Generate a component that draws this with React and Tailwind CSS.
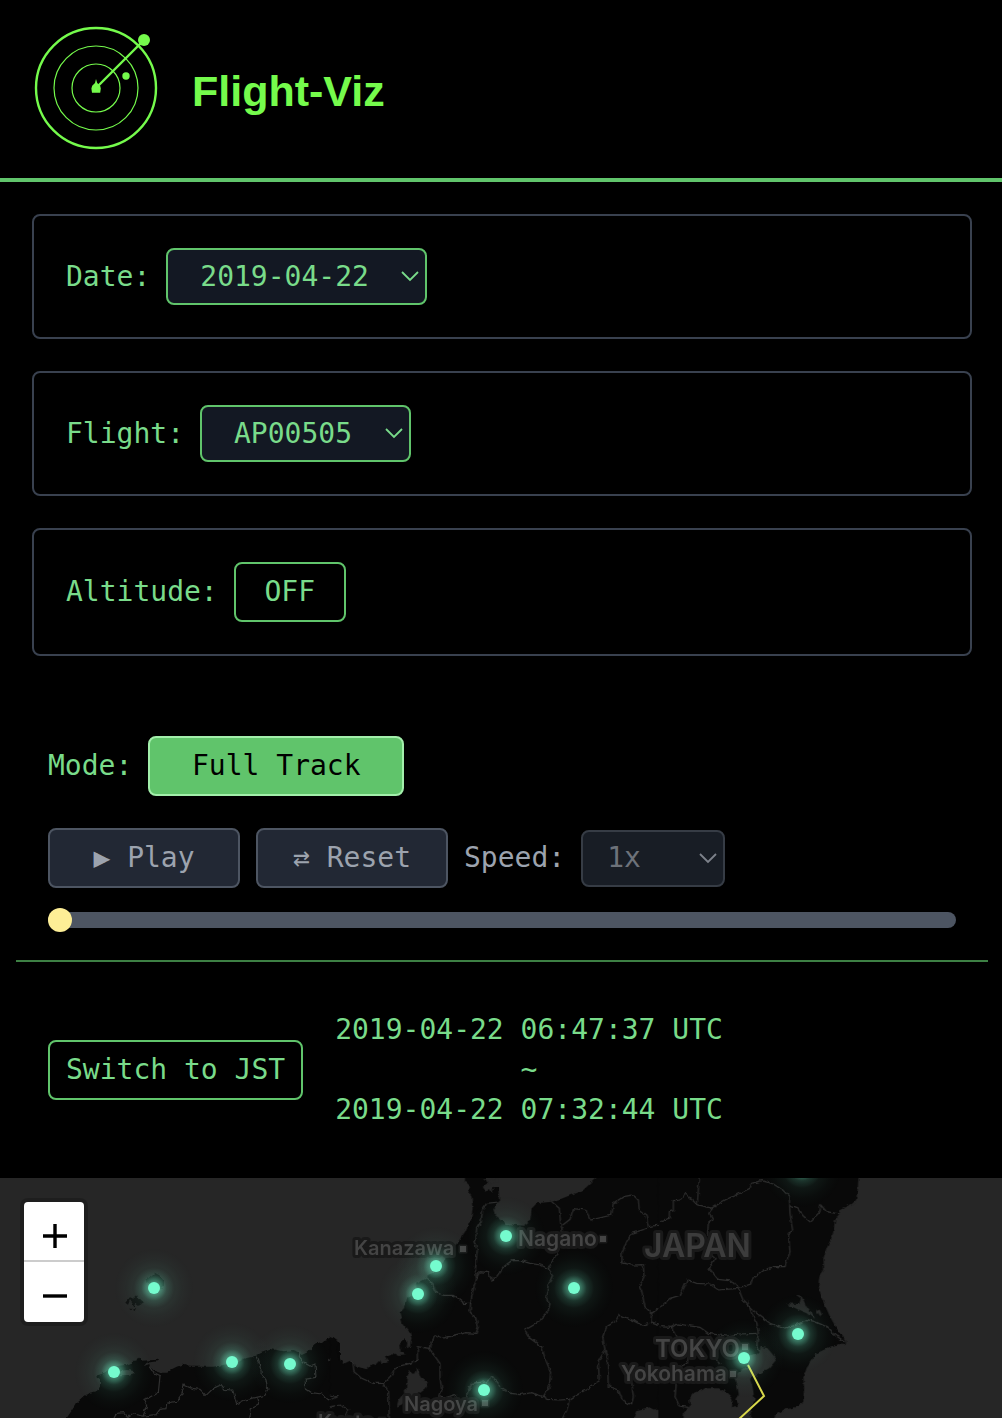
import React, { useState } from "react";

function RadarLogo() {
  return (
    <svg className="size-32 shrink-0" viewBox="0 0 128 128" fill="none" stroke="#75fb4c" aria-hidden="true">
      <circle cx="64" cy="64" r="60" strokeWidth="2.4" />
      <circle cx="64" cy="64" r="42" strokeWidth="1.2" />
      <circle cx="64" cy="64" r="24" strokeWidth="1.2" />
      <path d="M64 64 112 16" strokeWidth="2.4" />
      <circle cx="112" cy="16" r="6" fill="#75fb4c" stroke="none" />
      <circle cx="94" cy="52" r="3.7" fill="#75fb4c" stroke="none" />
      <path
        d="M64 55 65.2 59 68.2 62 68.8 64.5 68.2 68.8H60L59.4 64.5 60.2 61.8 63 59Z"
        fill="#75fb4c"
        stroke="none"
      />
    </svg>
  );
}

function Select({ id, className, chevron, options, ...rest }) {
  return (
    <span className="relative inline-flex">
      <select id={id} className={"h-[57px] appearance-none rounded-lg border-2 " + className} {...rest}>
        {options.map((o) => (
          <option key={o}>{o}</option>
        ))}
      </select>
      <svg
        className={"pointer-events-none absolute top-[22px] right-2 h-3 w-[18px] " + chevron}
        viewBox="0 0 18 12"
        fill="none"
        stroke="currentColor"
        strokeWidth="1.8"
        aria-hidden="true"
      >
        <path d="M1 2 9 10 17 2" />
      </svg>
    </span>
  );
}

function Card({ children }) {
  return (
    <div className="flex flex-wrap items-center gap-4 rounded-lg border-2 border-[#39414f] p-8">{children}</div>
  );
}

const GREEN_SELECT = "border-[#60c46b] bg-[#131823] pl-8 text-[#79db8a]";

const AIRPORTS = [
  [154, 110], [114, 194], [232, 184], [290, 186], [436, 88], [418, 116],
  [506, 58], [574, 110], [484, 212], [744, 180], [798, 156], [802, -10],
];

const CITIES = [
  ["Kanazawa", 354, 77, 20, 463, 71],
  ["Nagano", 518, 68, 21, 603, 61],
  ["Nagoya", 404, 233, 20, 485, 225],
  ["Kyoto", 318, 251, 20, 382, 243],
  ["Yokohama", 621, 203, 21, 733, 196],
  ["TOKYO", 655, 179, 24, 745, 169],
];

const LAND_WEST =
  "M180 780 200 744 215 722 228 702 250 682 270 668 290 664 300 650 300 628 288 618 308 612 324 600 335 590 375 585 395 580 398 572 410 572 416 561 425 572 476 569 476 573 440 578 430 590 412 596 448 582 450 590 462 602 480 608 502 608 515 598 530 590 548 584 570 590 640 590 680 583 705 580 730 566 752 562 770 556 785 548 815 538 850 544 880 540 895 545 905 555 920 548 945 524 970 512 1000 502 1020 520 1020 780Z";

const LAND_CENTRE =
  "M0 780 0 498 12 503 22 510 24 525 18 538 26 545 22 556 40 582 60 572 72 582 75 588 88 592 110 598 125 582 135 585 150 570 155 582 175 575 165 558 190 550 205 558 228 556 210 540 208 522 225 507 232 515 230 535 240 530 245 505 238 485 218 460 208 430 222 415 232 385 262 358 258 342 290 325 320 300 350 260 385 215 405 185 422 150 428 120 425 80 415 65 420 50 405 36 405 0 460 0 474 40 458 50 466 62 480 58 485 66 492 50 505 48 507 95 490 118 495 135 530 162 580 167 600 152 606 115 620 100 665 95 690 88 760 60 795 27 830 0 1020 0 1020 780Z";

const LAND_EAST =
  "M-5 0 597 0 595 24 593 60 588 90 575 102 540 118 538 135 525 150 518 195 500 235 490 265 492 300 478 320 475 345 485 385 510 440 535 485 558 512 556 525 535 522 510 530 470 550 440 590 430 620 432 655 430 695 410 710 370 720 345 735 335 780 -5 780Z";

const BORDERS_WEST = [
  "M448 590 460 608 480 618 475 668 455 680 432 688 440 705 430 738 400 732 385 742 372 728 350 730 342 744",
  "M430 738 468 734 480 718 498 716 500 700 530 694 545 672 552 645 575 655 600 658 618 676 640 655 662 645 672 658 698 660 710 702 735 690 770 682 795 676 804 660 798 630 784 610 776 570 770 556",
  "M770 682 776 705 754 716 748 750",
  "M900 545 898 560 915 580 930 588 945 582 948 622 916 628 916 655 935 668 965 672 980 688 1005 694 1020 712",
  "M985 572 1005 565 1000 578 1020 585",
];

const BORDERS_CENTRE = [
  "M505 96 470 100 458 118 453 155 440 175 438 205 432 215 442 240 436 300 440 325 428 365 422 400 420 425 438 445 445 470 438 490 410 488 380 494 340 504 315 494 302 520 298 535 330 580 330 620 335 660 326 690 328 712",
  "M290 325 305 340 318 368 345 376 370 376 400 400 422 400",
  "M438 325 450 305 475 308 485 330 500 320 520 290 545 272 575 272 600 280 632 285 655 296 668 315 655 345 648 380 660 405 650 430 620 460 585 480 600 505 635 530 645 565 662 605 658 650 640 680 605 668 570 674 545 670 510 650 488 620 470 635 425 640 412 668 405 710",
  "M665 95 688 115 692 160 698 188 690 215 680 250 655 296",
  "M698 165 720 148 730 116 768 120 780 150 845 135 850 100 880 80 910 75 925 90 928 120 948 135 955 170 990 165",
  "M955 174 905 190 890 215 876 250 876 278 905 285 940 284 942 320 928 350 935 365 945 410 965 430 1010 396",
  "M965 430 962 460 935 465 910 452 868 435 855 455 830 470 818 500 825 540 805 575 808 632 775 655 718 688 690 690 650 688 642 676",
  "M825 540 832 560 835 650 865 660 878 692 905 704 910 680 905 635",
  "M718 688 710 720 695 750",
  "M962 455 1020 475",
  "M68 572 72 605 95 625 130 640 160 640 185 615 200 590 240 580 262 570 262 530 298 535",
  "M160 640 176 665 178 750",
  "M0 675 20 680 0 690M0 710 30 705 55 718 40 750",
  "M380 675 350 685 320 680",
];

const BORDERS_EAST = [
  "M118 24 115 60 112 104 75 70 60 90 40 92 40 122 28 125 28 145 0 152",
  "M112 104 155 114 195 90 270 55 275 40 305 32 340 42 368 60 388 80 390 130 398 182 385 190 390 245 375 290 340 290 310 300 280 322 272 342 235 355 215 333 175 328 148 295 165 265 148 250",
  "M155 114 147 130 158 148 145 160 142 200",
  "M390 105 410 112 430 138 450 155 480 125 482 105 500 125 540 132",
  "M0 412 30 385 62 375 82 330 110 340 150 342 175 360 235 355 250 392 290 430 330 460 370 475 410 465 440 448 465 455 500 470 520 492 556 516",
  "M262 392 275 430 290 455 295 490 290 530 300 545",
  "M0 470 35 472 50 462 120 472 145 490 200 498 235 492 290 490",
  "M35 472 48 500 90 530 82 580 60 590 50 630 45 680 58 708 85 712",
  "M150 500 160 550 180 585",
];

const WATER_WEST = ["M355 606 380 600 403 603 402 610 385 615 360 616Z"];
const ISLANDS_WEST = [
  "M440 328 452 318 464 308 478 316 492 332 492 346 484 356 460 352 444 342Z",
  "M376 398 390 382 400 386 412 376 414 386 430 396 416 404 408 398 404 410 390 390 384 404ZM390 416 408 418 404 426Z",
];
const WATER_CENTRE = [
  "M238 600 252 612 262 592 272 622 294 638 285 655 262 672 245 690 200 710 205 690 228 660 230 625Z",
  "M905 780 910 744 920 720 960 712 1010 735 1020 780Z",
  "M462 28 505 26 505 34 480 40Z",
];
const WATER_EAST = [
  "M298 548 302 530 322 534 350 568 328 594 298 612 270 626 278 650 284 690 272 718 274 780 68 780 72 724 90 708 88 686 102 668 135 655 180 655 208 672 218 690 216 712 236 704 226 688 236 672 230 640 222 622 236 606 258 592 268 560Z",
  "M380 400 418 402 422 385 404 372 425 378 440 410 466 446 455 442 440 430 425 424 400 412 386 410Z",
  "M468 420 478 416 486 434 480 438Z",
];

function Paths({ list, ...rest }) {
  return list.map((d) => <path key={d} d={d} {...rest} />);
}

function Region({ x, land, islands = [], water, borders }) {
  return (
    <g transform={`translate(${x} -24)`}>
      <path d={land} fill="#090909" />
      <Paths list={islands} fill="#0f0f0f" />
      <Paths list={borders} fill="none" stroke="#303030" strokeWidth="3.6" />
      <Paths list={water} fill="#262626" />
    </g>
  );
}

function FlightMap() {
  return (
    <svg
      className="block h-60 w-full bg-[#262626]"
      viewBox="0 0 1002 240"
      preserveAspectRatio="xMinYMin slice"
      role="img"
      aria-label="Flight track map"
    >
      <defs>
        <radialGradient id="glow">
          <stop offset="0" stopColor="#75fbce" stopOpacity="0.75" />
          <stop offset="0.17" stopColor="#75fbce" stopOpacity="0.45" />
          <stop offset="0.32" stopColor="#75fbce" stopOpacity="0.18" />
          <stop offset="0.5" stopColor="#75fbce" stopOpacity="0.06" />
          <stop offset="0.75" stopColor="#75fbce" stopOpacity="0.02" />
          <stop offset="1" stopColor="#75fbce" stopOpacity="0" />
        </radialGradient>
        <filter
          id="rough"
          filterUnits="userSpaceOnUse"
          x="-10"
          y="-10"
          width="1030"
          height="262"
          colorInterpolationFilters="sRGB"
        >
          <feTurbulence type="fractalNoise" baseFrequency="0.2" numOctaves="2" seed="4" />
          <feDisplacementMap in="SourceGraphic" scale="4" xChannelSelector="R" yChannelSelector="G" />
        </filter>
      </defs>
      <g filter="url(#rough)">
        <g transform="scale(0.333333)">
          <Region x={0} land={LAND_WEST} islands={ISLANDS_WEST} water={WATER_WEST} borders={BORDERS_WEST} />
          <Region x={990} land={LAND_CENTRE} water={WATER_CENTRE} borders={BORDERS_CENTRE} />
          <Region x={1980} land={LAND_EAST} water={WATER_EAST} borders={BORDERS_EAST} />
        </g>
      </g>
      <g
        fill="#444444"
        stroke="#191919"
        strokeWidth="6"
        strokeLinejoin="round"
        paintOrder="stroke"
        fontFamily="Inter, sans-serif"
        fontWeight="600"
      >
        {CITIES.map(([name, x, y, size, mx, my]) => (
          <g key={name}>
            <text x={x} y={y} fontSize={size}>{name}</text>
            <rect x={mx - 3} y={my - 3} width="6" height="6" strokeWidth="3" />
          </g>
        ))}
        <text x="644" y="79" fontSize="32" fill="#3c3c3c">JAPAN</text>
      </g>
      <path d="M748 187 764 218 738 242" fill="none" stroke="#d8d74a" strokeWidth="2" />
      {AIRPORTS.map(([x, y]) => (
        <g key={x + "," + y}>
          <circle cx={x} cy={y} r="40" fill="url(#glow)" />
          <circle cx={x} cy={y} r="6" fill="#75fbce" />
        </g>
      ))}
    </svg>
  );
}

export default function App() {
  const [altitude, setAltitude] = useState(false);
  const [full, setFull] = useState(true);
  const [jst, setJst] = useState(false);
  const [position, setPosition] = useState(0);

  return (
    <div className="min-h-screen bg-black font-['DejaVu_Sans_Mono',monospace] text-[28px] leading-10 text-[#79db8a]">
      <header className="flex items-center gap-8 border-b-4 border-[#60c46b] px-8 pt-6 pb-[26px]">
        <RadarLogo />
        <h1 className="pt-1.5 font-['Liberation_Sans',sans-serif] text-[43px] leading-none font-bold text-[#75fb4c]">
          Flight-Viz
        </h1>
      </header>

      <main>
        <div className="flex flex-col gap-8 py-8 pr-[30px] pl-8">
          <Card>
            <label htmlFor="date">Date:</label>
            <Select id="date" className={"w-[261px] " + GREEN_SELECT} chevron="text-[#79db8a]" options={["2019-04-22"]} />
          </Card>
          <Card>
            <label htmlFor="flight">Flight:</label>
            <Select id="flight" className={"w-[211px] " + GREEN_SELECT} chevron="text-[#79db8a]" options={["AP00505"]} />
          </Card>
          <Card>
            <label htmlFor="altitude">Altitude:</label>
            <button
              id="altitude"
              type="button"
              className="h-15 w-28 rounded-lg border-2 border-[#60c46b]"
              onClick={() => setAltitude(!altitude)}
            >
              {altitude ? "ON" : "OFF"}
            </button>
          </Card>
        </div>

        <div className="mr-[14px] ml-4 border-b-2 border-[#3d8044] px-8 pt-12 pb-8">
          <div className="flex items-center gap-4">
            <label htmlFor="mode">Mode:</label>
            <button
              id="mode"
              type="button"
              className="h-15 w-64 rounded-lg border-2 border-[#a3efab] bg-[#60c46b] text-black"
              onClick={() => setFull(!full)}
            >
              {full ? "Full Track" : "Playback"}
            </button>
          </div>
          <div className="mt-8 flex flex-wrap items-center gap-4 text-[#9ca3ae]">
            <button type="button" disabled={full} className="h-15 w-48 rounded-lg border-2 border-[#4d5562] bg-[#222834]">
              ▶ Play
            </button>
            <button type="button" disabled={full} className="h-15 w-48 rounded-lg border-2 border-[#4d5562] bg-[#222834]">
              ⇄ Reset
            </button>
            <label htmlFor="speed">Speed:</label>
            <Select
              id="speed"
              className="w-36 border-[#363c45] bg-[#181d25] pl-6 text-[#6d727a] opacity-100"
              chevron="text-[#7d828b]"
              options={["1x"]}
              disabled={full}
            />
          </div>
          <input
            type="range"
            aria-label="Track position"
            min="0"
            max="100"
            value={position}
            onChange={(e) => setPosition(Number(e.target.value))}
            className="mt-6 block h-4 w-full appearance-none rounded-full bg-[#4d5562] [&::-webkit-slider-thumb]:size-6 [&::-webkit-slider-thumb]:appearance-none [&::-webkit-slider-thumb]:rounded-full [&::-webkit-slider-thumb]:bg-[#fdee96]"
          />
        </div>

        <div className="flex flex-wrap items-center gap-8 px-12 py-12">
          <button
            type="button"
            className="h-15 rounded-lg border-2 border-[#60c46b] px-4"
            onClick={() => setJst(!jst)}
          >
            {jst ? "Switch to UTC" : "Switch to JST"}
          </button>
          <p className="text-center">
            {jst ? "2019-04-22 15:47:37 JST" : "2019-04-22 06:47:37 UTC"}
            <br />~<br />
            {jst ? "2019-04-22 16:32:44 JST" : "2019-04-22 07:32:44 UTC"}
          </p>
        </div>

        <section className="relative">
          <FlightMap />
          <div className="absolute top-6 left-6 flex w-15 flex-col overflow-visible rounded-sm bg-white text-black shadow-[0_0_0_4px_rgba(0,0,0,0.2)]">
            <button type="button" aria-label="Zoom in" className="h-15 border-b-2 border-[#cccccc]">
              <svg className="size-15" viewBox="0 0 60 60" stroke="currentColor" strokeWidth="3.4" aria-hidden="true">
                <path d="M19 34H43M31 22V46" />
              </svg>
            </button>
            <button type="button" aria-label="Zoom out" className="h-15">
              <svg className="size-15" viewBox="0 0 60 60" stroke="currentColor" strokeWidth="3.4" aria-hidden="true">
                <path d="M19 34H43" />
              </svg>
            </button>
          </div>
        </section>
      </main>
    </div>
  );
}
